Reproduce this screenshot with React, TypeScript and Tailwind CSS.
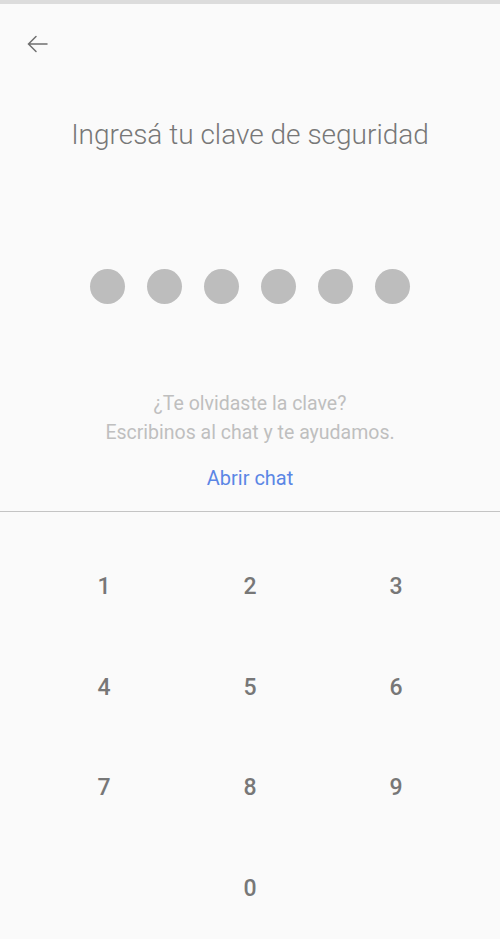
import React from 'react';

const keys = ['1', '2', '3', '4', '5', '6', '7', '8', '9', '', '0', ''];

export default function App() {
  return (
    <div className="w-[500px] h-[939px] bg-[#fafafa] flex flex-col overflow-hidden" style={{ fontFamily: 'Roboto, "Noto Sans", sans-serif' }}>
      <div className="h-[4px] shrink-0 bg-[#dcdcdc]" />
      <div className="h-[116px] shrink-0 pl-[27px] pt-[31px]">
        <svg width="22" height="18" viewBox="0 0 22 18" fill="none" stroke="#6f6f6f" strokeWidth="1.5" strokeLinecap="round">
          <path d="M20 9H2M9 1.5L1.5 9L9 16.5" />
        </svg>
      </div>
      <h1 className="shrink-0 text-center text-[28px] font-light text-[#777777] leading-[34px] mt-[-2px]">
        Ingresá tu clave de seguridad
      </h1>
      <div className="shrink-0 flex justify-center gap-[22px] mt-[117px]">
        {[0, 1, 2, 3, 4, 5].map((i) => (
          <div key={i} className="w-[35px] h-[35px] rounded-full bg-[#bdbdbd]" />
        ))}
      </div>
      <div className="shrink-0 mt-[85px] text-center text-[19.5px] leading-[29px] text-[#bfbfbf]">
        <p>¿Te olvidaste la clave?</p>
        <p>Escribinos al chat y te ayudamos.</p>
      </div>
      <button className="shrink-0 mt-[19px] self-center text-[20px] leading-[24px] text-[#5b86e5]">Abrir chat</button>
      <div className="shrink-0 mt-[21px] h-px bg-[#c4c4c4]" />
      <div className="shrink-0 grid grid-cols-3 px-[31px] mt-[25px]">
        {keys.map((k, i) => (
          <div key={i} className="h-[100.5px] flex items-center justify-center text-[23px] font-medium leading-[30px] text-[#777777]">
            {k}
          </div>
        ))}
      </div>
    </div>
  );
}
